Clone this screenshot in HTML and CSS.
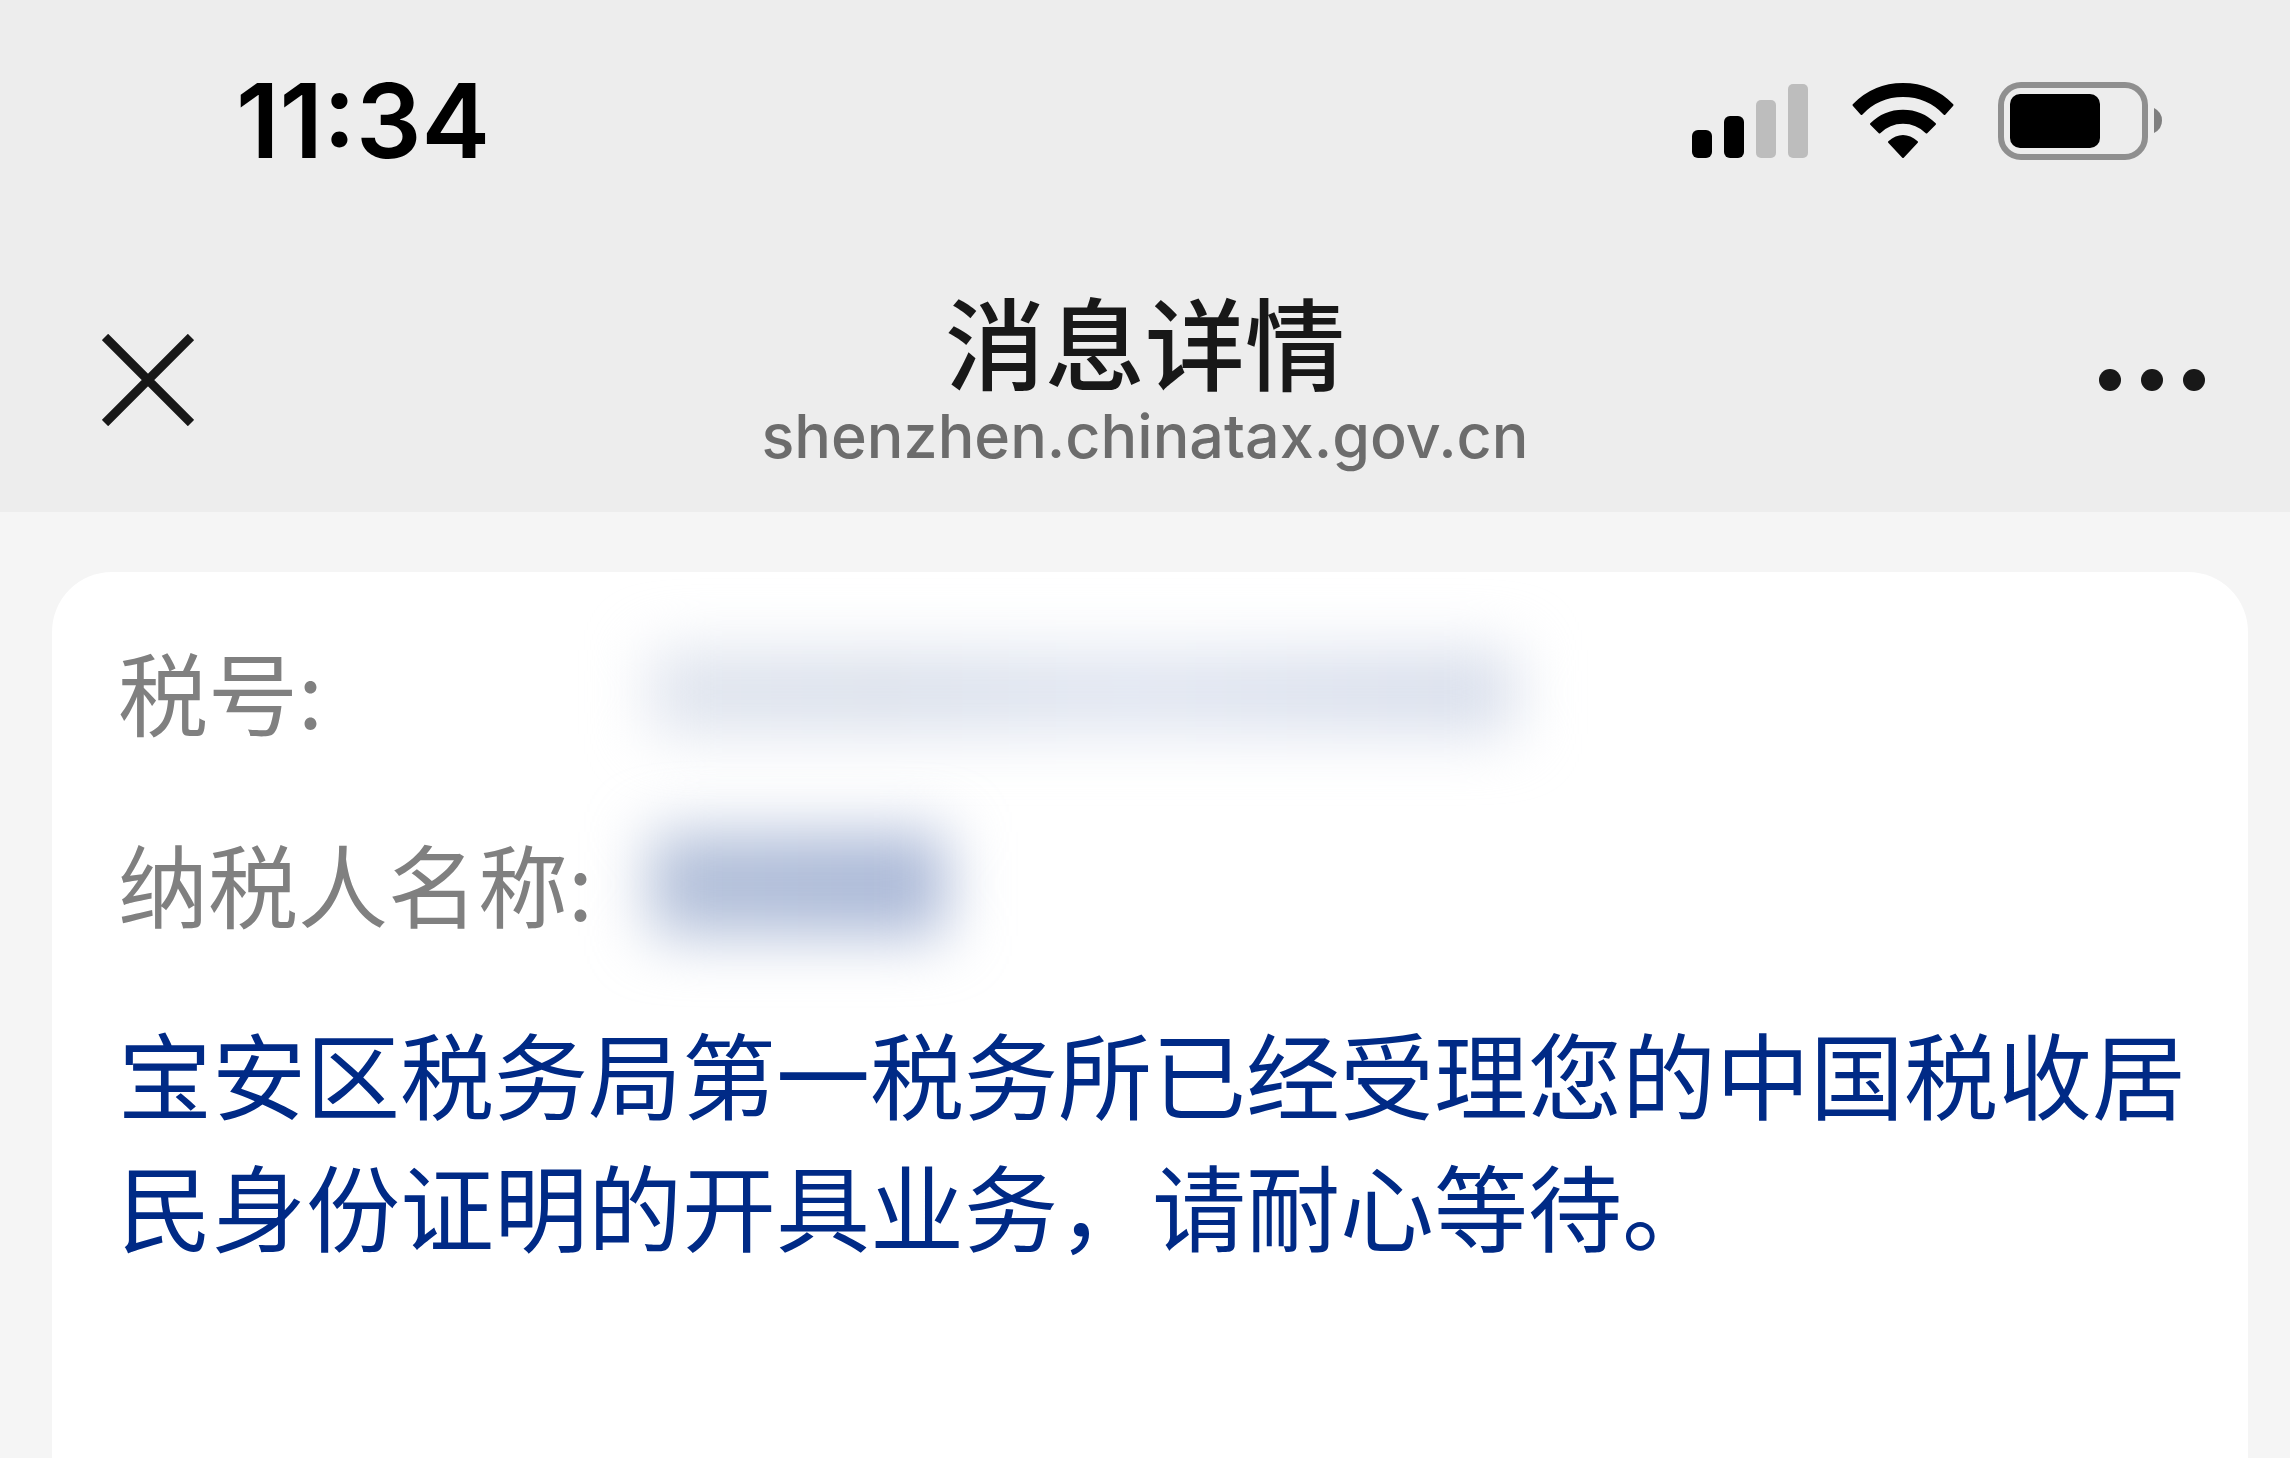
FILE: index.html
```html
<!DOCTYPE html>
<html lang="zh-CN">
<head>
<meta charset="utf-8">
<meta name="viewport" content="width=device-width, initial-scale=1">
<title>消息详情</title>
<link rel="stylesheet" href="styles.css">
</head>
<body>
<header class="top">
  <div class="status">
    <time class="clock">11:34</time>
    <div class="indicators">
      <svg class="signal" width="116" height="78" viewBox="0 0 116 78" role="img" aria-label="信号">
        <rect x="0" y="48" width="20" height="28" rx="6"/>
        <rect x="32" y="34" width="20" height="42" rx="6"/>
        <rect x="64" y="18" width="20" height="58" rx="5" fill="#bdbdbd"/>
        <rect x="96" y="2" width="20" height="74" rx="5" fill="#bdbdbd"/>
      </svg>
      <svg class="wifi" width="102" height="78" viewBox="0 -2 102 78" role="img" aria-label="无线网络">
        <g stroke="#000" stroke-width="2" stroke-linejoin="round">
          <path d="M1.5 21A69 69 0 0 1 100.500 21L92.500 30A57 57 0 0 0 9.500 30Z"/>
          <path d="M19 40A45 45 0 0 1 83 40L74.500 48.500A33 33 0 0 0 27.500 48.500Z"/>
          <path d="M37 58Q51 46 65 58L51 73Z"/>
        </g>
      </svg>
      <svg class="battery" width="164" height="78" viewBox="0 0 164 78" role="img" aria-label="电量">
        <rect x="3" y="3" width="144" height="72" rx="20" fill="none" stroke="#8f8f8f" stroke-width="6"/>
        <rect x="12" y="12" width="90" height="54" rx="10"/>
        <path d="M156 26Q164 30 164 38.500T156 51Z" fill="#7f7f7f"/>
      </svg>
    </div>
  </div>
  <nav class="nav">
    <button class="icon-button close" type="button" aria-label="关闭">
      <svg width="92" height="92" viewBox="0 0 92 92"><path d="M3 3L89 89M89 3L3 89" stroke="#181818" stroke-width="9"/></svg>
    </button>
    <div class="heading">
      <h1 class="title">消息详情</h1>
      <p class="host">shenzhen.chinatax.gov.cn</p>
    </div>
    <button class="icon-button more" type="button" aria-label="更多">
      <svg width="108" height="24" viewBox="0 0 108 24" fill="#181818"><circle cx="12" cy="12" r="11"/><circle cx="54" cy="12" r="11"/><circle cx="96" cy="12" r="11"/></svg>
    </button>
  </nav>
</header>
<main class="card">
  <dl class="fields">
    <dt>税号:</dt>
    <dd><span class="masked masked-number"></span></dd>
    <dt>纳税人名称:</dt>
    <dd><span class="masked masked-name"></span></dd>
  </dl>
  <p class="message">宝安区税务局第一税务所已经受理您的中国税收居民身份证明的开具业务，请耐心等待。</p>
</main>
</body>
</html>
```
FILE: styles.css
```css
* {
  box-sizing: border-box;
}

body {
  display: flex;
  flex-direction: column;
  min-height: 100vh;
  margin: 0;
  background: #f5f5f5;
  font-family: "Noto Sans CJK SC", sans-serif;
}

.top {
  background: #ededed;
}

.status {
  display: flex;
  align-items: center;
  justify-content: space-between;
  height: 248px;
  padding: 0 128px 6px 236px;
}

.clock {
  font: 600 103px/120px Inter, sans-serif;
}

.indicators {
  display: flex;
  gap: 44px;
}

.nav {
  display: grid;
  grid-template-columns: 1fr auto 1fr;
  align-items: center;
  height: 264px;
  padding: 0 84px;
}

.icon-button {
  display: flex;
  padding: 0;
  border: 0;
  background: none;
}

.close {
  justify-self: start;
  padding-left: 18px;
}

.more {
  justify-self: end;
}

.heading {
  padding-bottom: 12px;
  text-align: center;
}

.title {
  margin: 0 0 4px;
  color: #181818;
  font-size: 100px;
  font-weight: 500;
  line-height: 120px;
}

.host {
  margin: 0;
  color: #6c6c6c;
  font: 500 61px/64px Inter, sans-serif;
}

.card {
  flex: 1;
  margin: 60px 42px 0 52px;
  padding: 22px 60px 0 66px;
  border-radius: 60px 60px 0 0;
  background: #fff;
}

.fields {
  display: grid;
  grid-template-columns: 532px 1fr;
  align-items: center;
  grid-auto-rows: 192px;
  margin: 0;
}

.fields dt {
  color: #808080;
  font-size: 90px;
  white-space: nowrap;
}

.fields dd {
  margin: 0;
  padding-top: 4px;
}

.masked {
  display: block;
  filter: blur(30px);
}

.masked-number {
  width: 866px;
  height: 84px;
  background: linear-gradient(90deg, #dfe4ee, #dbe1ec 28%, #e1e6f1 55%, #d9dfec 92%);
}

.masked-name {
  width: 296px;
  height: 104px;
  background: linear-gradient(90deg, #b4c1da, #aab8d7);
}

.message {
  margin: 28px 0 0;
  color: #002a86;
  font-size: 94px;
  line-height: 132px;
}
```
